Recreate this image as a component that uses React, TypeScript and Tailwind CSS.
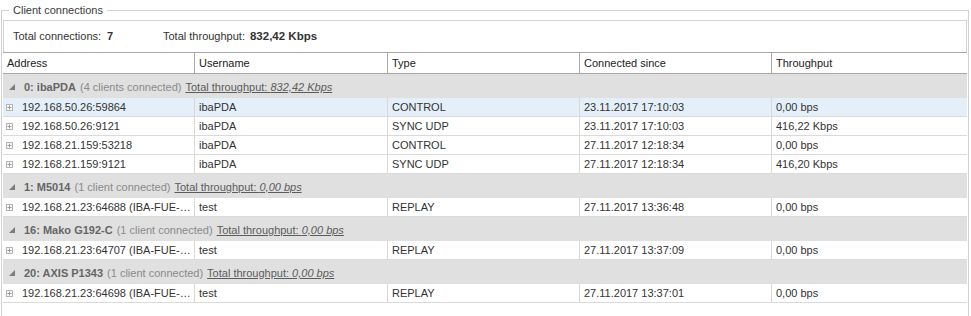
import React from "react";

type Row = [string, string, string, string, string];
type Group = { name: string; count: string; tp: string; rows: Row[] };

const groups: Group[] = [
  {
    name: "0: ibaPDA",
    count: "(4 clients connected)",
    tp: "832,42 Kbps",
    rows: [
      ["192.168.50.26:59864", "ibaPDA", "CONTROL", "23.11.2017 17:10:03", "0,00 bps"],
      ["192.168.50.26:9121", "ibaPDA", "SYNC UDP", "23.11.2017 17:10:03", "416,22 Kbps"],
      ["192.168.21.159:53218", "ibaPDA", "CONTROL", "27.11.2017 12:18:34", "0,00 bps"],
      ["192.168.21.159:9121", "ibaPDA", "SYNC UDP", "27.11.2017 12:18:34", "416,20 Kbps"],
    ],
  },
  {
    name: "1: M5014",
    count: "(1 client connected)",
    tp: "0,00 bps",
    rows: [["192.168.21.23:64688 (IBA-FUE-…", "test", "REPLAY", "27.11.2017 13:36:48", "0,00 bps"]],
  },
  {
    name: "16: Mako G192-C",
    count: "(1 client connected)",
    tp: "0,00 bps",
    rows: [["192.168.21.23:64707 (IBA-FUE-…", "test", "REPLAY", "27.11.2017 13:37:09", "0,00 bps"]],
  },
  {
    name: "20: AXIS P1343",
    count: "(1 client connected)",
    tp: "0,00 bps",
    rows: [["192.168.21.23:64698 (IBA-FUE-…", "test", "REPLAY", "27.11.2017 13:37:01", "0,00 bps"]],
  },
];

const cols = "grid grid-cols-[192px_193px_192px_192px_195px]";

function PlusBox() {
  return (
    <svg width="7" height="7" viewBox="0 0 7 7" className="shrink-0">
      <rect x="0.5" y="0.5" width="6" height="6" fill="#fafafa" stroke="#b4b4b4" />
      <line x1="1.5" y1="3.5" x2="5.5" y2="3.5" stroke="#9a9a9a" />
      <line x1="3.5" y1="1.5" x2="3.5" y2="5.5" stroke="#9a9a9a" />
    </svg>
  );
}

function Collapse() {
  return (
    <svg width="6" height="6" viewBox="0 0 6 6" className="shrink-0">
      <polygon points="6,0 6,6 0,6" fill="#7c7c7c" />
    </svg>
  );
}

export default function App() {
  return (
    <div className="w-[971px] h-[316px] overflow-hidden bg-white font-['Liberation_Sans',Arial,sans-serif] text-[11px] text-[#333]">
      <fieldset className="mt-[3px] ml-[1px] w-[968px] h-[340px] border border-[#d2d2d2] px-[1px] pb-0">
        <legend className="ml-[6px] px-[4px] leading-[14px] text-[#3a3a3a]">Client connections</legend>
        <div className="pt-[3px]">
          {/* stats */}
          <div className="h-[32px] border-t border-l border-r border-[#d4d4d4] flex items-center pl-[9px]">
            <div className="w-[150px] flex items-center">
              <span>Total connections:</span>
              <span className="ml-[6px] font-bold">7</span>
            </div>
            <div className="flex items-center">
              <span>Total throughput:</span>
              <span className="ml-[5px] font-bold text-[11.5px]">832,42 Kbps</span>
            </div>
          </div>
          {/* header */}
          <div className={`${cols} h-[22px] border-t border-b border-[#a8a8a8] text-[#222]`}>
            {["Address", "Username", "Type", "Connected since", "Throughput"].map((h, i) => (
              <div
                key={h}
                className={`flex items-center pl-[4px] ${i < 4 ? "border-r border-[#a8a8a8]" : ""}`}
              >
                {h}
              </div>
            ))}
          </div>
          {/* body */}
          {groups.map((g, gi) => (
            <div key={g.name}>
              <div className="h-[24px] bg-[#e0e0e0] flex items-center pl-[6px] pt-[2px]">
                <Collapse />
                <span className="ml-[9px] font-bold text-[#666]">{g.name}</span>
                <span className="ml-[4px] text-[#8a8a8a]">{g.count}</span>
                <span className="ml-[4px] underline text-[#5c5c5c]">
                  Total throughput: <span className="italic">{g.tp}</span>
                </span>
              </div>
              {g.rows.map((r, ri) => (
                <div
                  key={ri}
                  className={`${cols} h-[19px] border-b border-[#dadada] ${
                    gi === 0 && ri === 0 ? "bg-[#e4eff9]" : "bg-white"
                  }`}
                >
                  <div className="flex items-center pl-[3px] border-r border-[#d8d8d8] whitespace-nowrap overflow-hidden">
                    <PlusBox />
                    <span className="ml-[9px]">{r[0]}</span>
                  </div>
                  {r.slice(1).map((c, ci) => (
                    <div
                      key={ci}
                      className={`flex items-center pl-[4px] whitespace-nowrap ${
                        ci < 3 ? "border-r border-[#d8d8d8]" : ""
                      }`}
                    >
                      {c}
                    </div>
                  ))}
                </div>
              ))}
            </div>
          ))}
        </div>
      </fieldset>
    </div>
  );
}
